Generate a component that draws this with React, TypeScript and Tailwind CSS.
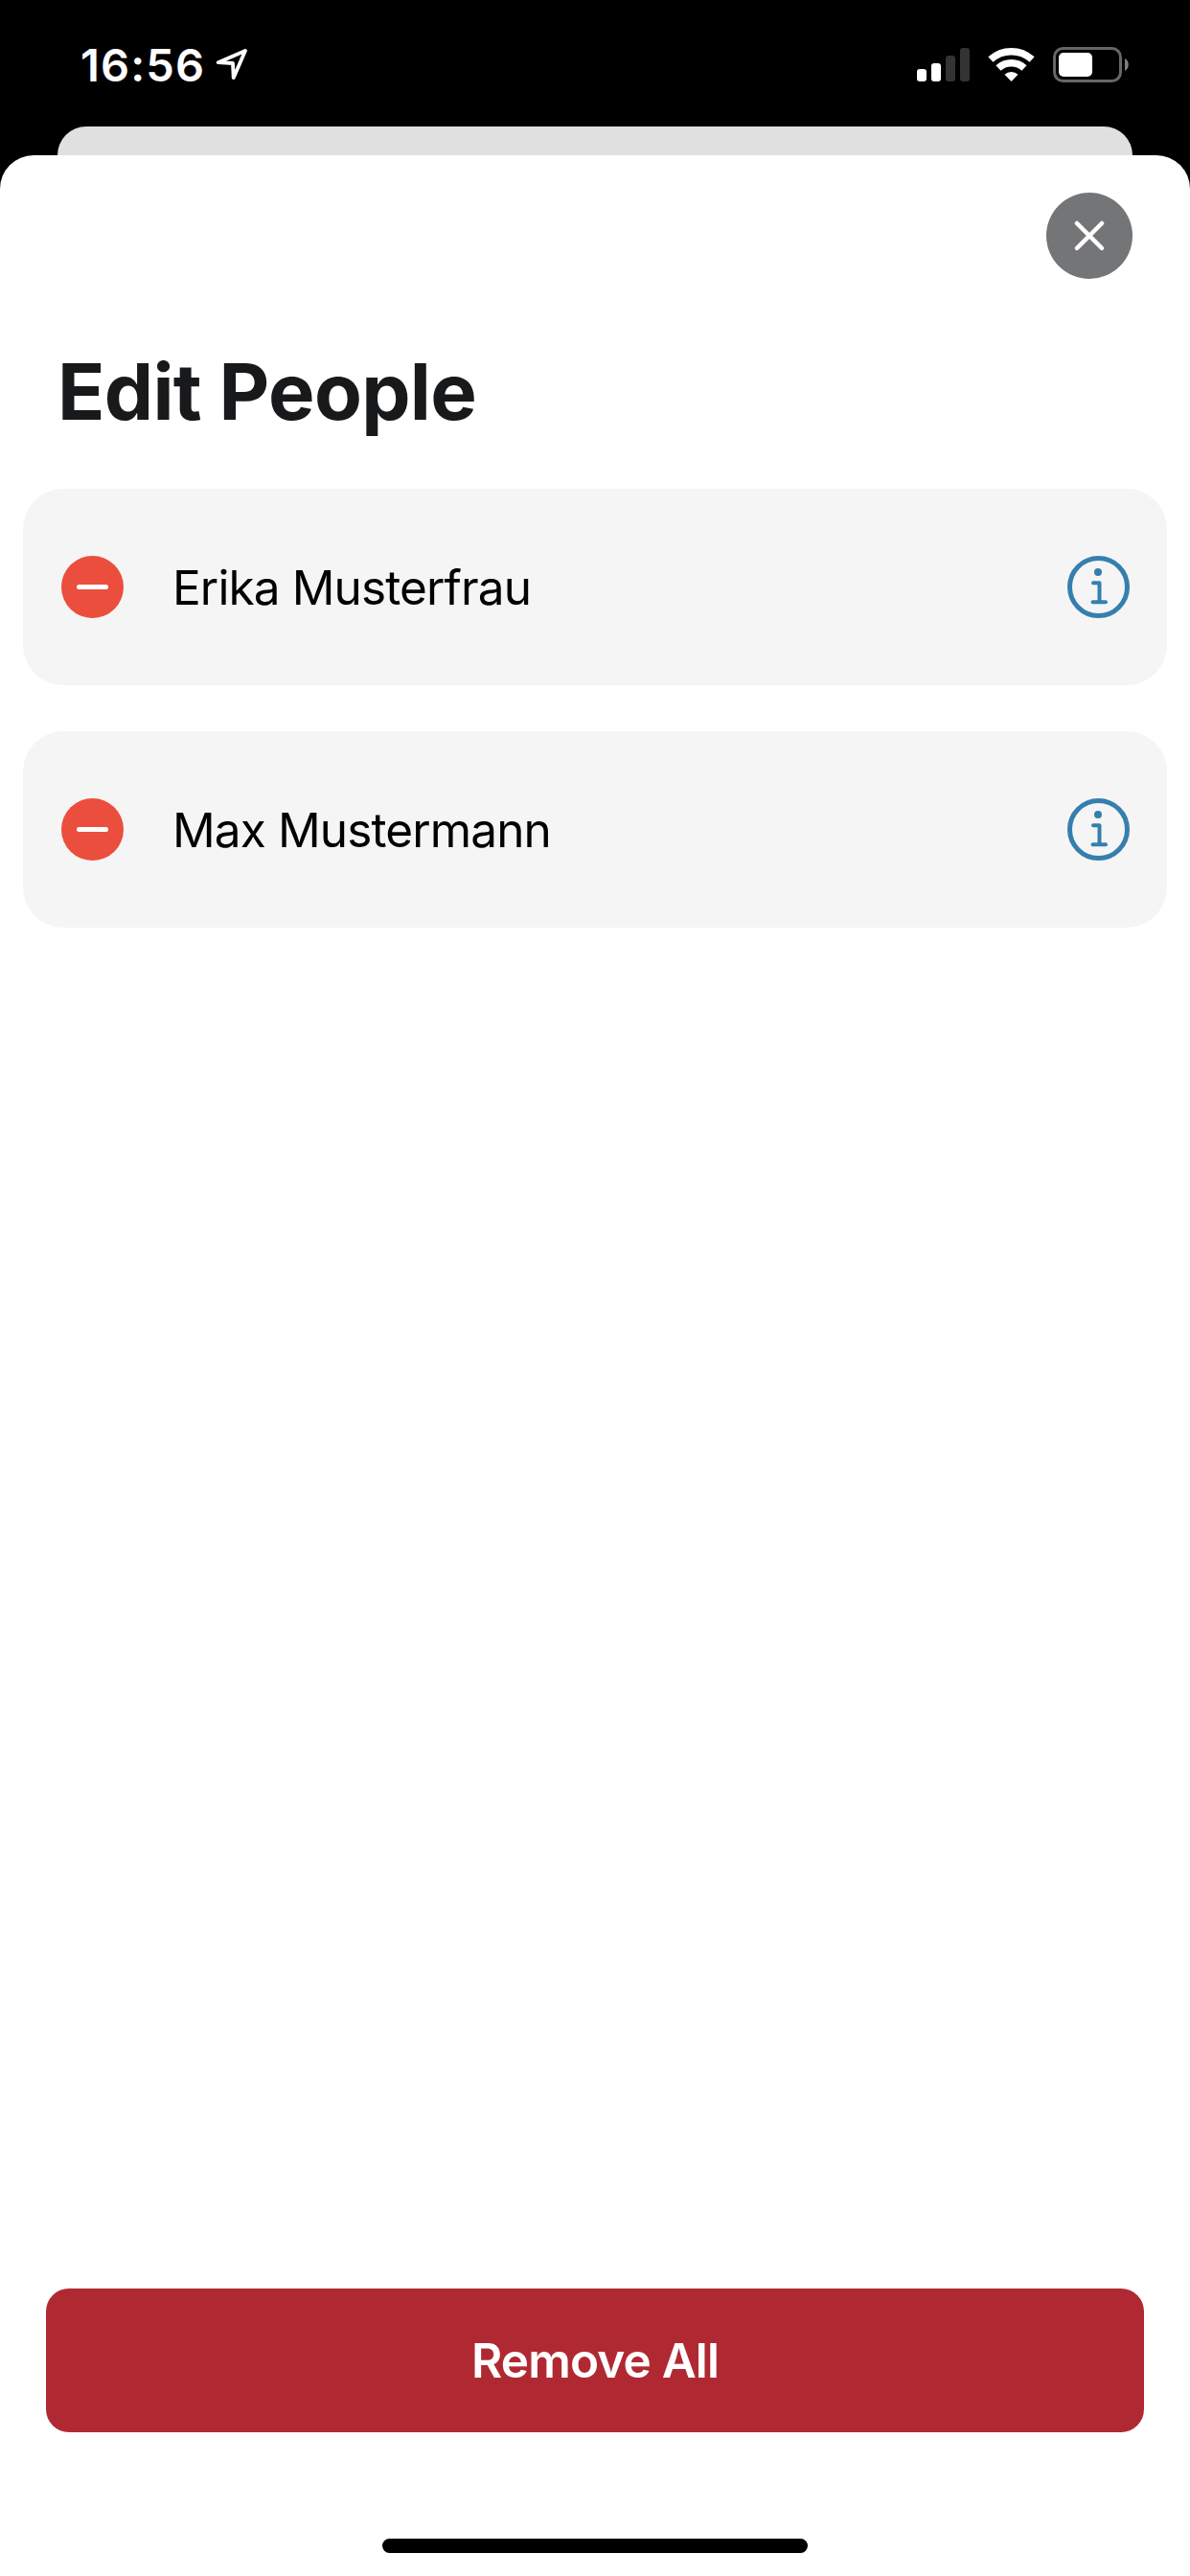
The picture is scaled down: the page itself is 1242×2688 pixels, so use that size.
const people = ['Erika Musterfrau', 'Max Mustermann'];

function StatusBar() {
  return (
    <header className="flex h-[132px] items-start text-white">
      <span className="mt-[40px] ml-[84px] h-[56px] w-[130px] text-[47px] leading-[56px] font-[560] tracking-[1.100px] whitespace-nowrap">
        16:56
      </span>
      <svg className="mt-[45px] ml-[6px]" width="45" height="45" viewBox="220 45 45 45" fill="none">
        <path
          d="M256 53L227.700 65.200L243 66L243.700 81.200Z"
          stroke="white"
          strokeWidth="3.800"
          strokeLinejoin="round"
        />
      </svg>
      <svg className="ml-[685px]" width="240" height="132" viewBox="950 0 240 132" fill="none">
        <rect x="957" y="72" width="10" height="13" rx="3" fill="white" />
        <rect x="972" y="66" width="10" height="19" rx="3" fill="white" />
        <rect x="987" y="58" width="10" height="27" rx="3" fill="#333" />
        <rect x="1002" y="50" width="10" height="35" rx="3" fill="#333" />
        <path d="M1033.900 62.100A31.800 31.800 0 0 1 1077.100 62.100" stroke="white" strokeWidth="7.500" />
        <path d="M1042 71A19.800 19.800 0 0 1 1069 71" stroke="white" strokeWidth="7.500" />
        <path d="M1055.500 85L1048.500 77.700A10.500 10.500 0 0 1 1062.500 77.700Z" fill="white" />
        <rect x="1100.500" y="50.500" width="69" height="34" rx="9" stroke="#666" strokeWidth="3" />
        <rect x="1105" y="55" width="35" height="25" rx="5" fill="white" />
        <path d="M1174 61A7.500 7.500 0 0 1 1174 74Z" fill="#808080" />
      </svg>
    </header>
  );
}

function PersonRow({ name }: { name: string }) {
  return (
    <li className="flex h-[205px] items-center rounded-[42px] bg-[#f5f5f5] pr-[39px] pl-[40px]">
      <button aria-label="Remove" className="flex size-[65px] items-center justify-center rounded-full bg-[#eb4e3d]">
        <span className="h-[5px] w-[33px] rounded-full bg-white" />
      </button>
      <span className="ml-[51px] flex-1 text-[49.500px] leading-[60px] tracking-[-0.880px] whitespace-nowrap text-black">{name}</span>
      <svg width="65" height="65" viewBox="0 0 65 65" fill="none" stroke="#357fae">
        <circle cx="32.500" cy="32.500" r="30" strokeWidth="5" />
        <circle cx="32" cy="17" r="4" fill="#357fae" stroke="none" />
        <path d="M27 28.200H33.500V48M26.500 48.200H40" strokeWidth="4" strokeLinecap="round" strokeLinejoin="round" />
      </svg>
    </li>
  );
}

export default function App() {
  return (
    <div className="flex h-[2688px] w-[1242px] flex-col overflow-hidden bg-black font-['Inter',sans-serif]">
      <StatusBar />
      <div className="mx-[60px] h-[30px] shrink-0 rounded-t-[30px] bg-[#e0e0e0]" />
      <main className="flex flex-1 flex-col rounded-t-[35px] bg-white">
        <button
          aria-label="Close"
          className="mt-[39px] mr-[60px] flex size-[90px] items-center justify-center self-end rounded-full bg-[#747577]"
        >
          <svg width="34" height="34" viewBox="0 0 34 34" stroke="white" strokeWidth="4.500" strokeLinecap="round">
            <path d="M4 4L30 30M30 4L4 30" />
          </svg>
        </button>
        <h1 className="mt-[68px] ml-[60px] h-[100px] text-[81.500px] leading-[100px] font-bold tracking-[-0.700px] whitespace-nowrap text-[#18191b]">
          Edit People
        </h1>
        <ul className="mx-6 mt-[51px] flex flex-col gap-12">
          {people.map((name) => (
            <PersonRow key={name} name={name} />
          ))}
        </ul>
        <button className="mx-12 mt-auto h-[150px] rounded-[24px] bg-[#b02932] text-[49.500px] leading-[60px] font-semibold tracking-[-0.850px] text-white">
          Remove All
        </button>
        <div className="mt-[111px] mb-6 h-[15px] w-[444px] self-center rounded-full bg-black" />
      </main>
    </div>
  );
}
